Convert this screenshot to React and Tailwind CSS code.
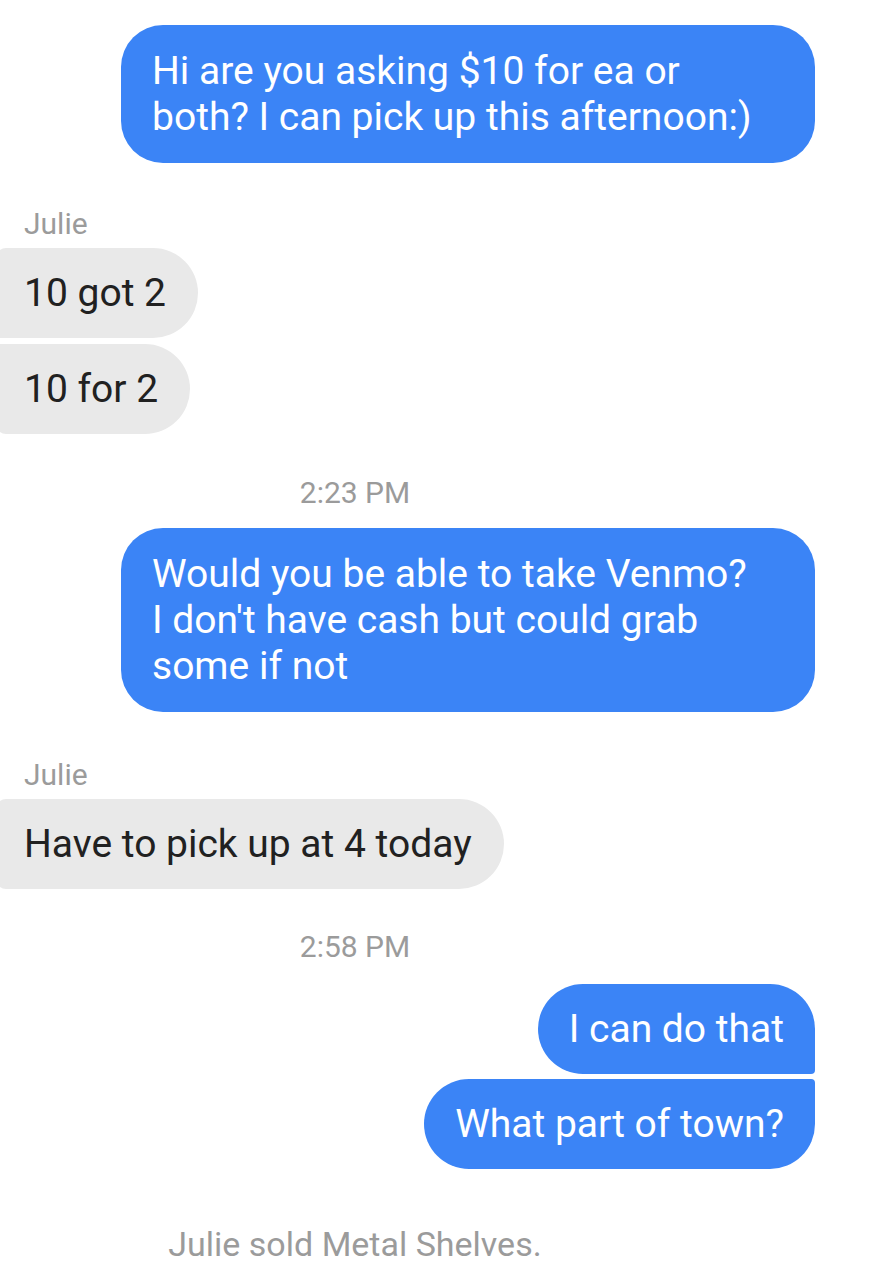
const font = { fontFamily: "Roboto, 'Noto Sans', sans-serif" };

const Outgoing = ({ children, className = "" }) => (
  <div className="flex justify-end pr-[59px]">
    <div className={`max-w-[694px] bg-[#3b84f6] text-white text-[39px] leading-[46px] px-[31px] py-[23px] ${className}`}>
      {children}
    </div>
  </div>
);

const Incoming = ({ children, className = "" }) => (
  <div className="flex justify-start">
    <div className={`-ml-1 bg-[#e9e9e9] text-[#212121] text-[39px] leading-[46px] pl-7 pr-8 py-[22px] ${className}`}>
      {children}
    </div>
  </div>
);

const Sender = ({ name }) => <div className="pl-6 text-[30px] leading-8 text-[#9b9b9b]">{name}</div>;

const Stamp = ({ time }) => <div className="w-[710px] text-center text-[30px] leading-8 text-[#9b9b9b]">{time}</div>;

export default function App() {
  return (
    <div className="min-h-[1279px] w-[874px] overflow-hidden bg-white pt-[25px]" style={font}>
      <Outgoing className="w-[694px] rounded-[42px]">
        Hi are you asking $10 for ea or
        <br />
        both? I can pick up this afternoon:)
      </Outgoing>

      <div className="mt-[45px]">
        <Sender name="Julie" />
      </div>
      <div className="mt-2 flex flex-col gap-[6px]">
        <Incoming className="rounded-r-[45px] rounded-tl-[10px] rounded-bl-[4px]">10 got 2</Incoming>
        <Incoming className="rounded-r-[45px] rounded-tl-[4px] rounded-bl-[10px]">10 for 2</Incoming>
      </div>

      <div className="mt-[43px]">
        <Stamp time="2:23 PM" />
      </div>

      <div className="mt-[19px]">
        <Outgoing className="w-[694px] rounded-[42px]">
          Would you be able to take Venmo?
          <br />
          I don't have cash but could grab
          <br />
          some if not
        </Outgoing>
      </div>

      <div className="mt-[47px]">
        <Sender name="Julie" />
      </div>
      <div className="mt-2">
        <Incoming className="rounded-r-[45px] rounded-l-[10px]">Have to pick up at 4 today</Incoming>
      </div>

      <div className="mt-[42px]">
        <Stamp time="2:58 PM" />
      </div>

      <div className="mt-[21px] flex flex-col gap-[5px]">
        <Outgoing className="rounded-l-[45px] rounded-tr-[45px] rounded-br-[4px] !py-[22px]">I can do that</Outgoing>
        <Outgoing className="rounded-l-[45px] rounded-br-[45px] rounded-tr-[4px] !py-[22px]">What part of town?</Outgoing>
      </div>

      <div className="mt-[57px] w-[710px] text-center text-[34px] leading-9 text-[#9b9b9b]">
        Julie sold Metal Shelves.
      </div>
    </div>
  );
}
